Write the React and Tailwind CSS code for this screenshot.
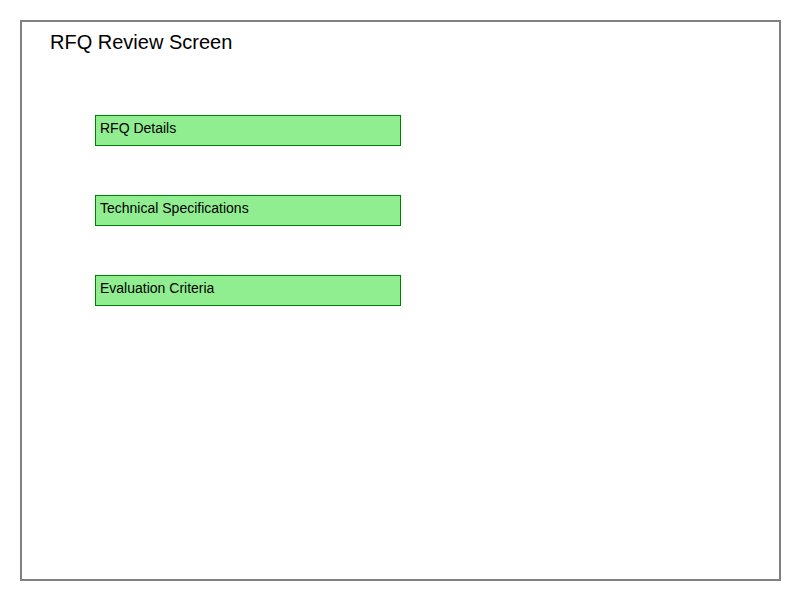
import React from 'react';

const SECTIONS = ['RFQ Details', 'Technical Specifications', 'Evaluation Criteria'];

export default function App() {
  return (
    <div className="w-[800px] h-[600px] bg-white pt-[20px] pl-[20px]" style={{ fontFamily: '"Liberation Sans", Arial, sans-serif' }}>
      <div className="w-[761px] h-[561px] border-2 border-[#808080] pt-[9px]">
        <div className="pl-[28px] text-[20px] leading-[23px] text-black">RFQ Review Screen</div>
        <div className="flex flex-col gap-[49px] mt-[61px] pl-[73px]">
          {SECTIONS.map((s) => (
            <div key={s} className="w-[306px] h-[31px] border border-[#008000] bg-[#90ee90] pt-[4px] pl-[4px] text-[14px] leading-[16px] text-black">
              {s}
            </div>
          ))}
        </div>
      </div>
    </div>
  );
}
